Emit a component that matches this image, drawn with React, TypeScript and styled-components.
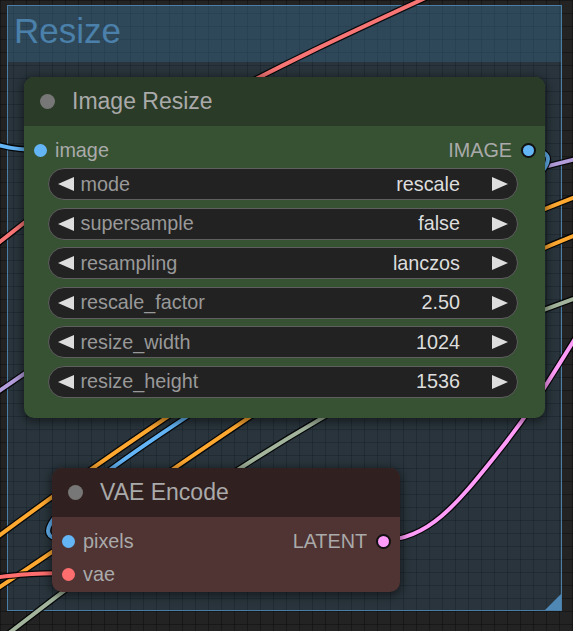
import React from 'react';
import styled, { createGlobalStyle } from 'styled-components';

const Global = createGlobalStyle`
  html, body { margin: 0; padding: 0; background: #202020; overflow: hidden; }
  body { font-family: "Liberation Sans", Arial, sans-serif; }
`;

const Canvas = styled.div`
  position: relative;
  width: 573px;
  height: 631px;
  overflow: hidden;
  background-color: #232323;
  background-image:
    linear-gradient(rgba(0, 0, 0, 0.3) 1px, transparent 1px),
    linear-gradient(90deg, rgba(0, 0, 0, 0.3) 1px, transparent 1px);
  background-size: 13px 13px;
`;

const Group = styled.div`
  position: absolute;
  left: 7px;
  top: 5px;
  width: 555px;
  height: 606px;
  box-sizing: border-box;
  border: 1.5px solid #4a7ea6;
  background: rgba(63, 120, 158, 0.2);
  display: flex;
  flex-direction: column;
`;

const GroupHeader = styled.div`
  height: 55.5px;
  flex: none;
  box-sizing: border-box;
  padding: 7px 0 0 6px;
  background: rgba(63, 120, 158, 0.3);
  font-size: 35px;
  line-height: 35px;
  color: #4a80aa;
`;

const GroupCorner = styled.div`
  position: absolute;
  right: 0;
  bottom: 0;
  width: 16px;
  height: 16px;
  background: #4f88b4;
  clip-path: polygon(100% 0, 100% 100%, 0 100%);
`;

const Wires = styled.svg`
  position: absolute;
  left: 0;
  top: 0;
  width: 573px;
  height: 631px;
  overflow: visible;
`;

const Node = styled.div<{ $x: number; $y: number; $w: number; $h: number; $bg: string }>`
  position: absolute;
  left: ${(p) => p.$x}px;
  top: ${(p) => p.$y}px;
  width: ${(p) => p.$w}px;
  height: ${(p) => p.$h}px;
  background: ${(p) => p.$bg};
  border-radius: 10px;
  box-shadow: 0 2px 10px 2px rgba(0, 0, 0, 0.45);
  display: flex;
  flex-direction: column;
  overflow: hidden;
`;

const TitleBar = styled.div<{ $bg: string }>`
  height: 49px;
  flex: none;
  background: ${(p) => p.$bg};
  display: flex;
  align-items: center;
  padding-left: 15.5px;
  gap: 17.5px;
`;

const TitleDot = styled.div`
  width: 15px;
  height: 15px;
  border-radius: 50%;
  background: #777;
`;

const TitleText = styled.div`
  font-size: 23px;
  color: #aaa;
  white-space: nowrap;
`;

const Body = styled.div`
  flex: 1;
  display: flex;
  flex-direction: column;
  padding-top: 8px;
  gap: 1px;
`;

const SlotRow = styled.div`
  height: 32px;
  flex: none;
  display: flex;
  align-items: center;
  padding: 0 9.5px;
  font-size: 19.8px;
  color: #aaa;
`;

const InSlot = styled.div`
  display: flex;
  align-items: center;
  gap: 8.5px;
  flex: 1;
`;

const OutSlot = styled.div`
  display: flex;
  align-items: center;
  gap: 8.5px;
`;

const Dot = styled.div<{ $c: string; $out?: boolean }>`
  width: ${(p) => (p.$out ? 15 : 13)}px;
  height: ${(p) => (p.$out ? 15 : 13)}px;
  box-sizing: border-box;
  border-radius: 50%;
  background: ${(p) => p.$c};
  border: ${(p) => (p.$out ? '2px solid #111' : 'none')};
`;

const Widgets = styled.div`
  display: flex;
  flex-direction: column;
  gap: 7.6px;
  padding: 1px 27px 0 24px;
`;

const Widget = styled.div`
  height: 32px;
  box-sizing: border-box;
  border: 1px solid #5f5f5f;
  border-radius: 16px;
  background: #222;
  display: flex;
  align-items: center;
  padding: 0 9px;
  font-size: 19.8px;
`;

const WLabel = styled.div`
  flex: 1;
  margin-left: 6.5px;
  color: #999;
  white-space: nowrap;
`;

const WValue = styled.div`
  color: #ddd;
  margin-right: 32px;
  white-space: nowrap;
`;

const Arrow = ({ dir }: { dir: 'l' | 'r' }) => (
  <svg width="16" height="14" viewBox="0 0 16 14" style={{ flex: 'none' }}>
    <polygon points={dir === 'l' ? '16,0 16,14 0,7' : '0,0 0,14 16,7'} fill="#ddd" />
  </svg>
);

const links = [
  { c: '#f87575', d: 'M -20 258 C 140 125 300 56 460 -18' },
  { c: '#b39ddb', d: 'M -20 405 C 180 255 400 203 600 153' },
  { c: '#ffa931', d: 'M -20 550 C 180 400 400 258 600 188' },
  { c: '#ffa931', d: 'M -20 600 C 180 470 400 296 600 226' },
  { c: '#a2b59c', d: 'M -10 648 C 190 490 400 354 600 290' },
  { c: '#64b5f6', d: 'M 528 150 C 679 150 -83 540 68 540' },
  { c: '#64b5f6', d: 'M -110 110 C -30 110 -40 150 40 150' },
  { c: '#ff6e6e', d: 'M -100 585 C -20 585 -10 573 68 573' },
  { c: '#ff9cf9', d: 'M 383 540 C 430 540 460 500 500 450 S 560 360 600 300' },
];

const widgets = [
  ['mode', 'rescale'],
  ['supersample', 'false'],
  ['resampling', 'lanczos'],
  ['rescale_factor', '2.50'],
  ['resize_width', '1024'],
  ['resize_height', '1536'],
];

export default function App() {
  return (
    <>
      <Global />
      <Canvas>
        <Group>
          <GroupHeader>Resize</GroupHeader>
          <GroupCorner />
        </Group>

        <Wires viewBox="0 0 573 631">
          {links.map((l, i) => (
            <g key={i} fill="none" strokeLinecap="round">
              <path d={l.d} stroke="rgba(0,0,0,0.85)" strokeWidth={6.5} />
              <path d={l.d} stroke={l.c} strokeWidth={4} />
            </g>
          ))}
        </Wires>

        <Node $x={24} $y={77} $w={521} $h={341} $bg="#365233">
          <TitleBar $bg="#2a3b28">
            <TitleDot />
            <TitleText>Image Resize</TitleText>
          </TitleBar>
          <Body>
            <SlotRow>
              <InSlot>
                <Dot $c="#64b5f6" />
                <span>image</span>
              </InSlot>
              <OutSlot>
                <span>IMAGE</span>
                <Dot $c="#64b5f6" $out />
              </OutSlot>
            </SlotRow>
            <Widgets>
              {widgets.map(([k, v]) => (
                <Widget key={k}>
                  <Arrow dir="l" />
                  <WLabel>{k}</WLabel>
                  <WValue>{v}</WValue>
                  <Arrow dir="r" />
                </Widget>
              ))}
            </Widgets>
          </Body>
        </Node>

        <Node $x={52} $y={468} $w={348} $h={124} $bg="#4f3433">
          <TitleBar $bg="#30201f">
            <TitleDot />
            <TitleText>VAE Encode</TitleText>
          </TitleBar>
          <Body>
            <SlotRow>
              <InSlot>
                <Dot $c="#64b5f6" />
                <span>pixels</span>
              </InSlot>
              <OutSlot>
                <span>LATENT</span>
                <Dot $c="#ff9cf9" $out />
              </OutSlot>
            </SlotRow>
            <SlotRow>
              <InSlot>
                <Dot $c="#ff6e6e" />
                <span>vae</span>
              </InSlot>
            </SlotRow>
          </Body>
        </Node>
      </Canvas>
    </>
  );
}
